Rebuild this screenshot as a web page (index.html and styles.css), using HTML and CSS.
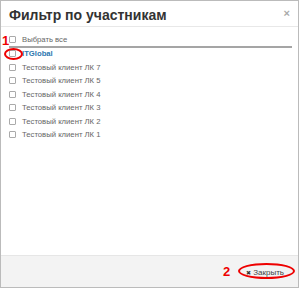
FILE: index.html
```html
<!DOCTYPE html>
<html lang="ru">
<head>
    <meta charset="UTF-8">
    <title>Фильтр по участникам</title>
    <link rel="stylesheet" href="styles.css">
</head>
<body>
    <div class="modal">
        <header class="modal-header">
            <h1>Фильтр по участникам</h1>
            <span class="close">&times;</span>
        </header>

        <div class="modal-body">
            <label class="check-row select-all">
                <span class="box"></span>
                <span>Выбрать все</span>
            </label>
            <ul class="members">
                <li class="check-row"><span class="box"></span><span class="org">ITGlobal</span></li>
                <li class="check-row"><span class="box"></span><span>Тестовый клиент ЛК 7</span></li>
                <li class="check-row"><span class="box"></span><span>Тестовый клиент ЛК 5</span></li>
                <li class="check-row"><span class="box"></span><span>Тестовый клиент ЛК 4</span></li>
                <li class="check-row"><span class="box"></span><span>Тестовый клиент ЛК 3</span></li>
                <li class="check-row"><span class="box"></span><span>Тестовый клиент ЛК 2</span></li>
                <li class="check-row"><span class="box"></span><span>Тестовый клиент ЛК 1</span></li>
            </ul>
        </div>

        <footer class="modal-footer">
            <button class="btn-close"><span class="x">&#10006;</span> Закрыть</button>
        </footer>

        <!-- red annotations -->
        <span class="mark mark-1">1</span>
        <span class="ring ring-1"></span>
        <span class="mark mark-2">2</span>
        <span class="ring ring-2"></span>
    </div>
</body>
</html>
```

FILE: styles.css
```css
* {
    box-sizing: border-box;
    margin: 0;
    padding: 0;
}

body {
    font-family: 'Liberation Sans', Arial, sans-serif;
    background: #fff;
    color: #555;
}

.modal {
    position: relative;
    width: 299px;
    height: 288px;
    border: 1px solid #bbb;
    display: flex;
    flex-direction: column;
    background: #fff;
}

.modal-header {
    height: 26px;
    border-bottom: 1px solid #e8e8e8;
    display: flex;
    align-items: center;
    justify-content: space-between;
    padding: 0 8px 0 8px;
}

.modal-header h1 {
    font-size: 14px;
    font-weight: bold;
    color: #333;
    margin-top: 3px;
}

.close {
    font-size: 11px;
    color: #aaa;
    font-weight: bold;
    margin-top: -2px;
}

.modal-body {
    flex: 1;
    padding: 8px 6px 0 8px;
}

.check-row {
    display: flex;
    align-items: center;
    gap: 6px;
    height: 13.5px;
    font-size: 7.7px;
    color: #666;
}

.select-all {
    height: 13px;
    padding-bottom: 2px;
    border-bottom: 2px solid #a5a5a5;
}

.members {
    list-style: none;
    margin-top: -1px;
}

.box {
    width: 7px;
    height: 7px;
    border: 1px solid #aaa;
    border-radius: 1px;
    background: #fff;
}

.org {
    color: #2d78b0;
    font-weight: bold;
}

.modal-footer {
    height: 32px;
    background: #f3f3f3;
    border-top: 1px solid #e6e6e6;
    display: flex;
    align-items: center;
    justify-content: flex-end;
    padding-right: 14px;
}

.btn-close {
    font-family: inherit;
    font-size: 8px;
    color: #444;
    background: transparent;
    border: none;
    padding: 2px 0;
    display: flex;
    align-items: center;
    gap: 2px;
    margin-top: 2px;
}

.btn-close .x {
    font-size: 6px;
    color: #333;
}

.mark {
    position: absolute;
    color: #e00;
    font-weight: bold;
    font-size: 13px;
    line-height: 1;
}

.mark-1 {
    left: 1px;
    top: 33px;
}

.mark-2 {
    left: 222px;
    top: 264px;
}

.ring {
    position: absolute;
    border: 2px solid #e00;
    border-radius: 50%;
}

.ring-1 {
    left: 3px;
    top: 47px;
    width: 19px;
    height: 12px;
}

.ring-2 {
    left: 237px;
    top: 262px;
    width: 57px;
    height: 16px;
}
```
